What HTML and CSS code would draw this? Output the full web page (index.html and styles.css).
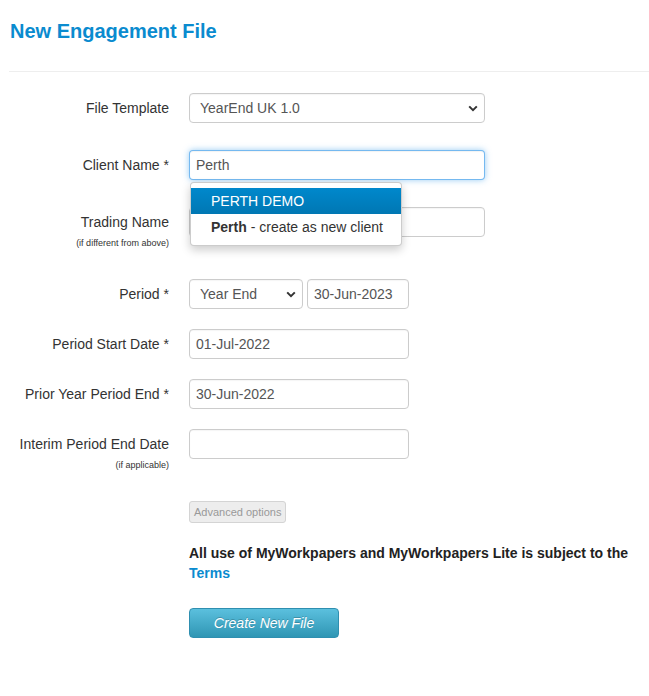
FILE: index.html
```html
<!DOCTYPE html>
<html lang="en">
<head>
    <meta charset="UTF-8">
    <meta name="viewport" content="width=device-width, initial-scale=1.0">
    <title>New Engagement File</title>
    <link rel="stylesheet" href="styles.css">
</head>
<body>
    <div class="page">
        <h1>New Engagement File</h1>
        <hr>

        <form class="form">
            <div class="row first">
                <label class="lbl">File Template</label>
                <div class="ctrl">
                    <select class="field wide">
                        <option>YearEnd UK 1.0</option>
                    </select>
                </div>
            </div>

            <div class="row first">
                <label class="lbl">Client Name *</label>
                <div class="ctrl typeahead-wrap">
                    <input type="text" class="field wide focus" value="Perth">
                    <!-- suggestions list -->
                    <ul class="typeahead">
                        <li class="active">PERTH DEMO</li>
                        <li><b>Perth</b> - create as new client</li>
                    </ul>
                </div>
            </div>

            <div class="row trading">
                <label class="lbl">Trading Name<small>(if different from above)</small></label>
                <div class="ctrl">
                    <input type="text" class="field wide">
                </div>
            </div>

            <div class="row">
                <label class="lbl">Period *</label>
                <div class="ctrl pair">
                    <select class="field period">
                        <option>Year End</option>
                    </select>
                    <input type="text" class="field date-short" value="30-Jun-2023">
                </div>
            </div>

            <div class="row">
                <label class="lbl">Period Start Date *</label>
                <div class="ctrl">
                    <input type="text" class="field date" value="01-Jul-2022">
                </div>
            </div>

            <div class="row">
                <label class="lbl">Prior Year Period End *</label>
                <div class="ctrl">
                    <input type="text" class="field date" value="30-Jun-2022">
                </div>
            </div>

            <div class="row">
                <label class="lbl">Interim Period End Date<small>(if applicable)</small></label>
                <div class="ctrl">
                    <input type="text" class="field date">
                </div>
            </div>

            <div class="actions">
                <button type="button" class="btn-adv">Advanced options</button>
                <p class="terms">All use of MyWorkpapers and MyWorkpapers Lite is subject to the <a href="#">Terms</a></p>
                <button type="button" class="btn-create">Create New File</button>
            </div>
        </form>
    </div>
</body>
</html>
```
FILE: styles.css
```css
body{
    margin: 0;
    background: #fff;
    color: #333;
    font: 14px/20px "Liberation Sans", Arial, sans-serif;
}
.page{
    padding: 0 0 0 9px;
}
h1{
    margin: 0;
    padding: 19px 0 0 1px;
    font-size: 20px;
    line-height: 24px;
    color: #0a8bcf;
}
hr{
    margin: 28px 0 21px 0;
    border: 0;
    border-top: 1px solid #eee;
}
.row{
    display: flex;
    align-items: flex-start;
    margin-bottom: 20px;
}
.row.first{
    margin-bottom: 27px;
}
.row.trading{
    margin-bottom: 30px;
}
.lbl{
    width: 160px;
    padding-top: 5px;
    margin-right: 20px;
    text-align: right;
    line-height: 20px;
}
.lbl small{
    display: block;
    font-size: 9px;
    line-height: 12px;
    margin-top: 5px;
}
.ctrl{
    position: relative;
}
.pair{
    display: flex;
    gap: 4px;
}
.field{
    box-sizing: border-box;
    height: 30px;
    padding: 4px 6px;
    border: 1px solid #ccc;
    border-radius: 4px;
    background: #fff;
    color: #555;
    font: 14px "Liberation Sans", Arial, sans-serif;
    box-shadow: inset 0 1px 1px rgba(0,0,0,0.04);
    outline: none;
}
select.field{
    appearance: none;
    -webkit-appearance: none;
    padding-left: 10px;
    background: #fff url("data:image/svg+xml;utf8,<svg xmlns='http://www.w3.org/2000/svg' width='10' height='7' viewBox='0 0 10 7'><path d='M1.2 1.4 L5 5.2 L8.8 1.4' fill='none' stroke='%23333' stroke-width='2'/></svg>") no-repeat right 6px center;
}
.wide{
    width: 296px;
}
.period{
    width: 114px;
}
.date-short{
    width: 102px;
}
.date{
    width: 220px;
}
.focus{
    border-color: rgba(82,168,236,0.8);
    box-shadow: inset 0 1px 1px rgba(0,0,0,0.05), 0 0 6px rgba(82,168,236,0.6);
}
.typeahead{
    position: absolute;
    top: 32px;
    left: 1px;
    z-index: 10;
    width: 212px;
    box-sizing: border-box;
    margin: 0;
    padding: 5px 0;
    list-style: none;
    background: #fff;
    border: 1px solid rgba(0,0,0,0.2);
    border-radius: 4px;
    box-shadow: 0 4px 10px rgba(0,0,0,0.2);
}
.typeahead li{
    padding: 3px 20px;
    line-height: 20px;
    color: #333;
    white-space: nowrap;
}
.typeahead li.active{
    color: #fff;
    background: linear-gradient(#0088cc, #0077b3);
}
.actions{
    padding: 10px 0 0 180px;
}
.btn-adv{
    display: block;
    height: 22px;
    padding: 0 4px;
    border: 1px solid #d4d4d4;
    border-radius: 3px;
    background: #ededed;
    color: #999;
    font: 11px "Liberation Sans", Arial, sans-serif;
}
.terms{
    margin: 20px 0 25px 0;
    font-weight: 700;
    color: #222;
}
.terms a{
    color: #0a8bcf;
    text-decoration: none;
}
.btn-create{
    width: 150px;
    height: 30px;
    border: 1px solid #2f8fb0;
    border-radius: 4px;
    background: linear-gradient(#5bc0de, #2f96b4);
    color: #fff;
    font: italic 14px "Liberation Sans", Arial, sans-serif;
    text-shadow: 0 -1px 0 rgba(0,0,0,0.2);
}
```
